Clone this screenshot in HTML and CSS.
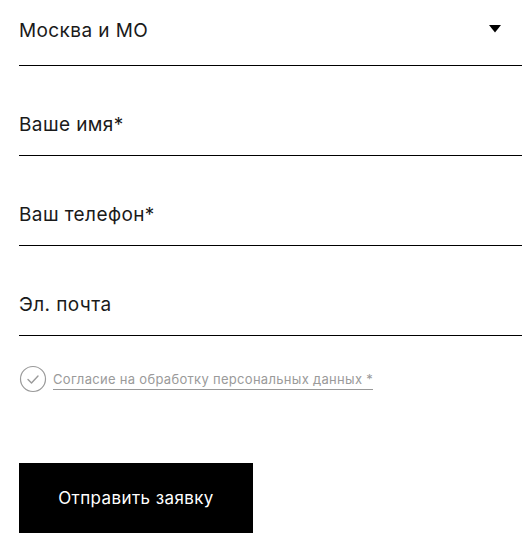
FILE: index.html
```html
<!DOCTYPE html>
<html lang="ru">
<head>
<meta charset="utf-8">
<link rel="stylesheet" href="styles.css">
</head>
<body>
<form class="form">
  <div class="field field-first">
    <span class="value">Москва и МО</span>
    <svg class="caret" width="12" height="8" viewBox="0 0 12 8"><polygon points="0,0 12,0 6,7.5" fill="#000"/></svg>
  </div>
  <div class="field"><span class="value">Ваше имя*</span></div>
  <div class="field"><span class="value">Ваш телефон*</span></div>
  <div class="field"><span class="value">Эл. почта</span></div>
  <div class="consent">
    <span class="check">
      <svg width="28" height="28" viewBox="0 0 28 28"><circle cx="14" cy="14" r="12.5" fill="none" stroke="#9a9a9a" stroke-width="1.2"/><polyline points="9,14.5 12.5,18 19,11" fill="none" stroke="#9a9a9a" stroke-width="1.4" stroke-linecap="round" stroke-linejoin="round"/></svg>
    </span>
    <span class="consent-text">Согласие на обработку персональных данных *</span>
  </div>
  <button type="button" class="submit">Отправить заявку</button>
</form>
</body>
</html>
```
FILE: styles.css
```css
html, body {
  margin: 0;
  padding: 0;
  background: #fff;
}
body {
  font-family: Inter, "Liberation Sans", sans-serif;
  color: #1a1a1a;
}
.form {
  width: 503px;
  margin-left: 19px;
  display: flex;
  flex-direction: column;
}
.field {
  display: flex;
  align-items: center;
  justify-content: space-between;
  border-bottom: 1px solid #000;
  padding: 44px 0 15px 0;
}
.field-first {
  padding: 16px 21px 19px 0;
}
.value {
  font-size: 19px;
  line-height: 30px;
  letter-spacing: 0.4px;
}
.caret {
  display: block;
  margin-top: -4px;
}
.consent {
  display: flex;
  align-items: center;
  margin-top: 29px;
  gap: 6px;
}
.check {
  display: flex;
}
.consent-text {
  font-size: 13px;
  line-height: 18px;
  color: #9a9a9a;
  letter-spacing: 0.3px;
  border-bottom: 1px solid #999;
  padding-bottom: 1px;
  margin-top: 2px;
}
.submit {
  margin-top: 70px;
  width: 234px;
  height: 70px;
  background: #000;
  color: #fff;
  border: 0;
  font-family: Inter, "Liberation Sans", sans-serif;
  font-size: 17px;
  letter-spacing: 0.4px;
  padding: 0;
}
```
